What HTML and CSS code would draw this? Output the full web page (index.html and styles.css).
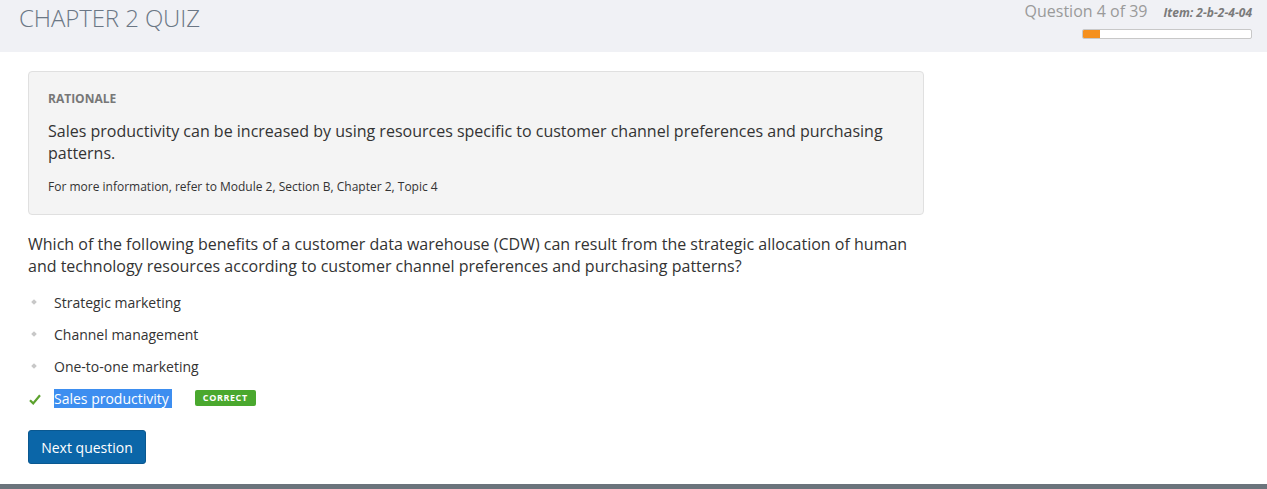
FILE: index.html
```html
<!DOCTYPE html>
<html>
<head>
<meta charset="utf-8">
<link rel="stylesheet" href="styles.css">
</head>
<body>
<div class="page">
  <header class="header">
    <h1 class="title">CHAPTER 2 QUIZ</h1>
    <div class="status">
      <div class="status-line">
        <span class="qcount">Question 4 of 39</span>
        <span class="item">Item: 2-b-2-4-04</span>
      </div>
      <div class="progress"><div class="progress-fill" style="width:10.3%"></div></div>
    </div>
  </header>
  <main class="content">
    <section class="rationale">
      <div class="rationale-label">RATIONALE</div>
      <p class="rationale-text">Sales productivity can be increased by using resources specific to customer channel preferences and purchasing patterns.</p>
      <p class="rationale-ref">For more information, refer to Module 2, Section B, Chapter 2, Topic 4</p>
    </section>
    <p class="question">Which of the following benefits of a customer data warehouse (CDW) can result from the strategic allocation of human and technology resources according to customer channel preferences and purchasing patterns?</p>
    <ul class="options">
      <li class="option"><span class="marker"><span class="diamond"></span></span><span>Strategic marketing</span></li>
      <li class="option"><span class="marker"><span class="diamond"></span></span><span>Channel management</span></li>
      <li class="option"><span class="marker"><span class="diamond"></span></span><span>One-to-one marketing</span></li>
      <li class="option"><span class="marker"><svg class="check" width="12" height="11" viewBox="0 0 12 11"><path d="M1 6.2 L4.2 9.4 L11 1.2" fill="none" stroke="#5ca22e" stroke-width="2.2"/></svg></span><span class="selected">Sales productivity</span><span class="badge">CORRECT</span></li>
    </ul>
    <button class="next">Next question</button>
  </main>
  <div class="footer-bar"></div>
</div>
</body>
</html>
```

FILE: styles.css
```css
html, body {
  margin: 0;
  padding: 0;
}
body {
  font-family: "Open Sans", "Liberation Sans", sans-serif;
  color: #333;
  background: #fff;
  width: 1267px;
  height: 489px;
  overflow: hidden;
}
.page {
  display: flex;
  flex-direction: column;
  height: 489px;
}
.header {
  height: 52px;
  background: #f0f1f5;
  display: flex;
  justify-content: space-between;
  align-items: flex-start;
  flex-shrink: 0;
}
.title {
  margin: 0;
  padding: 2px 0 0 19px;
  font-size: 24px;
  font-weight: 300;
  color: #6b7785;
  line-height: 32px;
  letter-spacing: -0.1px;
}
.status {
  display: flex;
  flex-direction: column;
  align-items: flex-end;
  padding: 0 15px 0 0;
}
.status-line {
  display: flex;
  align-items: baseline;
  gap: 16px;
  height: 24px;
  line-height: 22px;
}
.qcount {
  font-size: 16px;
  font-weight: 400;
  color: #9a9a9a;
}
.item {
  font-size: 12px;
  font-weight: 700;
  font-style: italic;
  color: #7a7a7a;
}
.progress {
  margin-top: 5px;
  width: 168px;
  height: 8px;
  border: 1px solid #c8c8c8;
  background: #fff;
  border-radius: 2px;
  overflow: hidden;
}
.progress-fill {
  height: 100%;
  background: #f5901e;
}
.content {
  padding: 19px 0 0 28px;
  flex: 1;
}
.rationale {
  width: 855px;
  background: #f4f4f4;
  border: 1px solid #e0e0e0;
  border-radius: 4px;
  padding: 18px 20px 19px 19px;
}
.rationale-label {
  font-size: 12px;
  font-weight: 700;
  color: #777;
  line-height: 17px;
}
.rationale-text {
  margin: 13px 0 0 0;
  font-size: 16px;
  line-height: 22px;
  color: #333;
}
.rationale-ref {
  margin: 14px 0 0 0;
  font-size: 12px;
  line-height: 17px;
  color: #333;
}
.question {
  margin: 18px 0 0 0;
  width: 895px;
  font-size: 16px;
  line-height: 22px;
  color: #333;
}
.options {
  list-style: none;
  margin: 9px 0 0 0;
  padding: 0;
}
.option {
  display: flex;
  align-items: center;
  height: 32px;
  font-size: 14px;
  color: #333;
}
.marker {
  width: 26px;
  display: flex;
  align-items: center;
  padding-left: 1px;
  box-sizing: border-box;
}
.diamond {
  width: 4px;
  height: 4px;
  margin-left: 3px;
  background: #c8c8c8;
  transform: rotate(45deg);
}
.check {
  display: block;
  margin-top: 2px;
}
.selected {
  background: #3d8ef0;
  color: #fff;
  line-height: 19px;
  padding-right: 3px;
}
.badge {
  margin-left: 23px;
  background: #4aa82e;
  color: #fff;
  font-size: 9px;
  font-weight: 700;
  letter-spacing: 0.6px;
  line-height: 16px;
  padding: 0 8px;
  border-radius: 2px;
}
.next {
  margin-top: 16px;
  background: #0b66a8;
  color: #fff;
  border: 1px solid #0a5890;
  border-radius: 3px;
  font-family: "Open Sans", "Liberation Sans", sans-serif;
  font-size: 14px;
  height: 34px;
  width: 118px;
  padding: 0;
}
.footer-bar {
  height: 5px;
  background: #6b747c;
  flex-shrink: 0;
}
```
